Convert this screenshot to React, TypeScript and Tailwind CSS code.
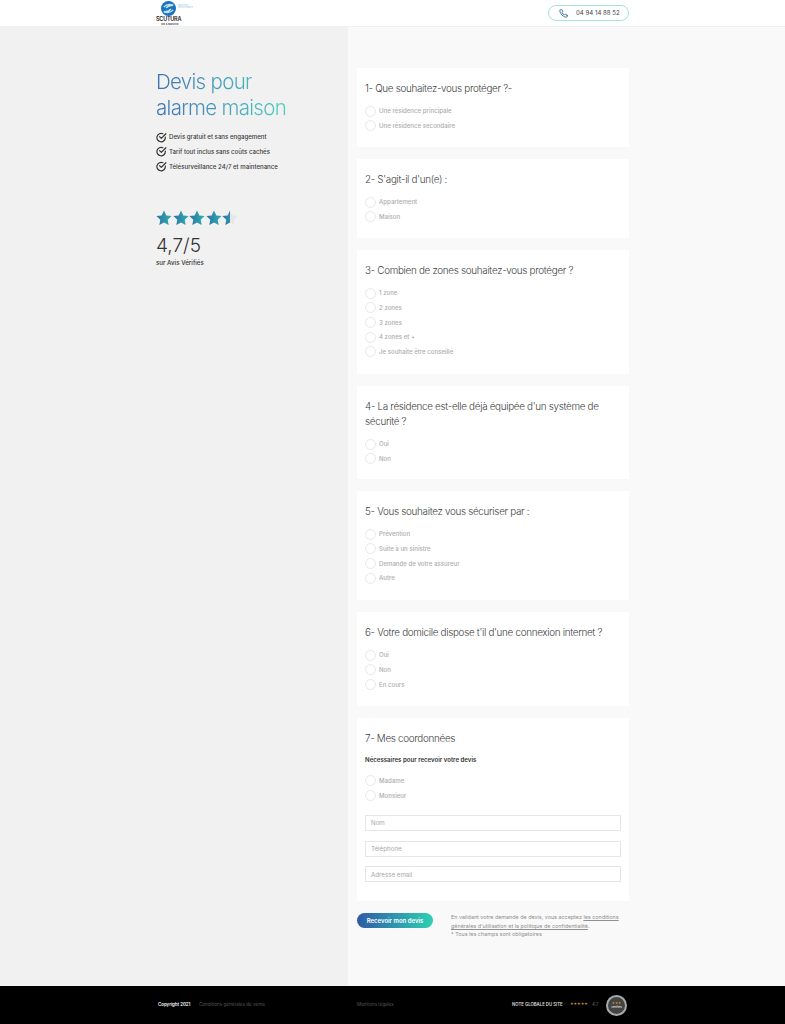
import React from 'react';

const font = { fontFamily: 'Inter, "Liberation Sans", sans-serif' };

function Radio({ label }: { label: string }) {
  return (
    <div className="flex h-[14.67px] items-center gap-[3px]">
      <span className="h-[11px] w-[11px] shrink-0 rounded-full border border-[#e8e8e8] bg-white" />
      <span className="text-[6.1px] font-medium leading-none text-[#adadad]">{label}</span>
    </div>
  );
}

function Title({ children }: { children: React.ReactNode }) {
  return <h2 className="text-[9.9px] font-light leading-[15px] tracking-[-0.32px] text-[#3f3f3f]">{children}</h2>;
}

function Question({ title, options, height }: { title: React.ReactNode; options: string[]; height: string }) {
  return (
    <section className={`bg-white px-[8px] pt-[12.5px] ${height}`}>
      <Title>{title}</Title>
      <div className="mt-[8.5px] flex flex-col">
        {options.map((o) => (
          <Radio key={o} label={o} />
        ))}
      </div>
    </section>
  );
}

function Star({ id, half }: { id: string; half?: boolean }) {
  const d = 'M8 .6l2.3 4.8 5.3.7-3.900 3.600 1 5.200L8 12.400l-4.700 2.500 1-5.200L.4 6.100l5.300-.7z';
  return (
    <svg viewBox="0 0 16 16" className="h-[16px] w-[16px]">
      <defs>
        <linearGradient id={id} x1="0" y1="0" x2="1" y2="0">
          <stop offset="0" stopColor="#2f6fa8" />
          <stop offset="1" stopColor="#2bb3ad" />
        </linearGradient>
        <clipPath id={`${id}c`}>
          <rect x="0" y="0" width="8" height="16" />
        </clipPath>
      </defs>
      {half && <path d={d} fill="#e6e6e6" />}
      <path d={d} fill={`url(#${id})`} clipPath={half ? `url(#${id}c)` : undefined} />
    </svg>
  );
}

function Check() {
  return (
    <svg viewBox="0 0 12 12" className="h-[11px] w-[11px] shrink-0" fill="none" stroke="#333" strokeWidth="1.3" strokeLinecap="round" strokeLinejoin="round">
      <path d="M10.200 5.600v.5a4.600 4.600 0 1 1-2.700-4.200" />
      <path d="M10.800 1.900 5.800 7 3.900 5.100" />
    </svg>
  );
}

function Logo() {
  return (
    <div className="relative h-[27px] w-[40px]">
      <svg viewBox="0 0 16 16" className="absolute left-[5px] top-[1px] h-[15px] w-[15px]">
        <circle cx="8" cy="8" r="8" fill="#1b73bd" />
        <path d="M3 6.500C6 3 10 3.500 13 4.500 10 4.500 7 5.500 5.500 7.500M13 9.500C10 13 6 12.500 3 11.500 6 11.500 9 10.500 10.500 8.500" fill="none" stroke="#bfe3f5" strokeWidth="1.500" />
      </svg>
      <span className="absolute left-[22px] top-[4px] w-[14px] text-[2px] leading-[2.5px] text-[#9cc6e2]">Sécurité et télésurveillance</span>
      <span className="absolute left-0 top-[16px] text-[5.5px] font-semibold leading-[7px] tracking-[-0.25px] text-[#222]">SCUTURA</span>
      <span className="absolute left-[5px] top-[23px] text-[2.5px] font-bold leading-[3px] text-[#444]">VIE &amp; SERVICE</span>
    </div>
  );
}

export default function App() {
  return (
    <div className="flex h-[1024px] w-[785px] flex-col overflow-hidden bg-[#f9f9f9]" style={font}>
      <header className="flex h-[27px] shrink-0 items-center justify-between border-b border-[#f0f0f0] bg-white pl-[156px] pr-[156px]">
        <Logo />
        <div className="flex h-[16px] w-[81px] items-center rounded-full border border-[#a5e3dc] bg-white pl-[10px]">
          <svg viewBox="0 0 24 24" className="h-[9px] w-[9px]" fill="none" stroke="#2f6f9f" strokeWidth="2.4" strokeLinecap="round" strokeLinejoin="round">
            <path d="M22 16.900v3a2 2 0 0 1-2.200 2 19.800 19.800 0 0 1-8.600-3.100 19.500 19.500 0 0 1-6-6A19.800 19.800 0 0 1 2.100 4.200 2 2 0 0 1 4.100 2h3a2 2 0 0 1 2 1.700c.1 1 .4 1.900.7 2.800a2 2 0 0 1-.5 2.100L8.100 9.900a16 16 0 0 0 6 6l1.300-1.300a2 2 0 0 1 2.100-.4c.9.3 1.800.6 2.800.7a2 2 0 0 1 1.700 2z" />
          </svg>
          <span className="ml-[8px] text-[6.1px] leading-none text-[#444]">04 94 14 88 52</span>
        </div>
      </header>

      <div className="flex min-h-0 flex-1">
        <aside className="w-[348px] shrink-0 bg-[#f1f1f1] pl-[156px] pt-[42px]">
          <h1 className="w-[130px] whitespace-nowrap bg-gradient-to-r from-[#3f6fb5] to-[#4fd0bb] bg-clip-text text-[20.5px] font-light leading-[26px] tracking-[-0.7px] text-transparent">
            Devis pour
            <br />
            alarme maison
          </h1>
          <ul className="mt-[10.5px] flex flex-col gap-[3.6px]">
            {['Devis gratuit et sans engagement', 'Tarif tout inclus sans coûts cachés', 'Télésurveillance 24/7 et maintenance'].map((t) => (
              <li key={t} className="flex h-[11px] items-center gap-[2px] text-[6.1px] font-medium text-[#3a3a3a]">
                <Check />
                {t}
              </li>
            ))}
          </ul>
          <div className="mt-[38.5px] flex gap-[0.5px]">
            <Star id="s1" />
            <Star id="s2" />
            <Star id="s3" />
            <Star id="s4" />
            <Star id="s5" half />
          </div>
          <p className="mt-[8px] text-[19px] font-light leading-[24px] text-[#333]">4,7/5</p>
          <p className="mt-[1px] text-[6.2px] font-medium leading-[8px] text-[#333]">sur Avis Vérifiés</p>
        </aside>

        <main className="flex-1 pl-[9px] pr-[156px] pt-[41px]">
          <div className="flex flex-col gap-[12px]">
            <Question height="h-[79px]" title="1- Que souhaitez-vous protéger ?-" options={['Une résidence principale', 'Une résidence secondaire']} />
            <Question height="h-[79px]" title="2- S'agit-il d'un(e) :" options={['Appartement', 'Maison']} />
            <Question height="h-[124px]" title="3- Combien de zones souhaitez-vous protéger ?" options={['1 zone', '2 zones', '3 zones', '4 zones et +', 'Je souhaite être conseillé']} />
            <Question height="h-[93px]" title={<>4- La résidence est-elle déjà équipée d'un système de<br />sécurité ?</>} options={['Oui', 'Non']} />
            <Question height="h-[109px]" title="5- Vous souhaitez vous sécuriser par :" options={['Prévention', 'Suite à un sinistre', 'Demande de votre assureur', 'Autre']} />
            <Question height="h-[94px]" title="6- Votre domicile dispose t'il d'une connexion internet ?" options={['Oui', 'Non', 'En cours']} />
            <section className="h-[183px] bg-white px-[8px] pt-[12.5px]">
              <Title>7- Mes coordonnées</Title>
              <p className="mt-[10.5px] text-[6.1px] font-semibold leading-[8px] text-[#333]">Nécessaires pour recevoir votre devis</p>
              <div className="mt-[9.67px] flex flex-col">
                <Radio label="Madame" />
                <Radio label="Monsieur" />
              </div>
              <div className="mt-[12px] flex flex-col gap-[9.7px]">
                {['Nom', 'Téléphone', 'Adresse email'].map((p) => (
                  <div key={p} className="flex h-[16px] items-center border border-[#e6e6e6] bg-white pl-[5px] text-[6.2px] text-[#a8a8a8]">
                    {p}
                  </div>
                ))}
              </div>
            </section>
          </div>
          <div className="mt-[12px] flex items-start gap-[18px]">
            <button className="h-[15px] w-[76px] shrink-0 rounded-full bg-gradient-to-r from-[#2f5aa5] to-[#2fd0b0] text-[6px] font-semibold leading-none text-white">
              Recevoir mon devis
            </button>
            <p className="whitespace-nowrap text-[5.4px] leading-[8.7px] text-[#8f8f8f]">
              En validant votre demande de devis, vous acceptez <span className="underline">les conditions</span>
              <br />
              <span className="underline">générales d'utilisation et la politique de confidentialité</span>.
              <br />* Tous les champs sont obligatoires
            </p>
          </div>
        </main>
      </div>

      <footer className="flex h-[38px] shrink-0 items-center bg-black pl-[158px]">
        <span className="w-[41px] text-[4.4px] font-semibold text-white">Copyright 2021</span>
        <span className="w-[158px] text-[4.6px] text-[#555]">Conditions générales de vente</span>
        <span className="w-[155px] text-[4.6px] text-[#555]">Mentions légales</span>
        <span className="w-[58px] text-[4.3px] font-semibold text-[#ddd]">NOTE GLOBALE DU SITE</span>
        <span className="w-[22px] whitespace-nowrap text-[3.4px] text-[#d09a2a]">★★★★★</span>
        <span className="w-[14px] text-[4.4px] text-[#777]">4.7</span>
        <div className="flex h-[21px] w-[21px] flex-col items-center justify-center rounded-full border-2 border-[#aaa] bg-[#444] text-[3px] leading-[4px] text-white">
          <span className="text-[#d09a2a]">★★★</span>
          <span>vérifiés</span>
        </div>
      </footer>
    </div>
  );
}
